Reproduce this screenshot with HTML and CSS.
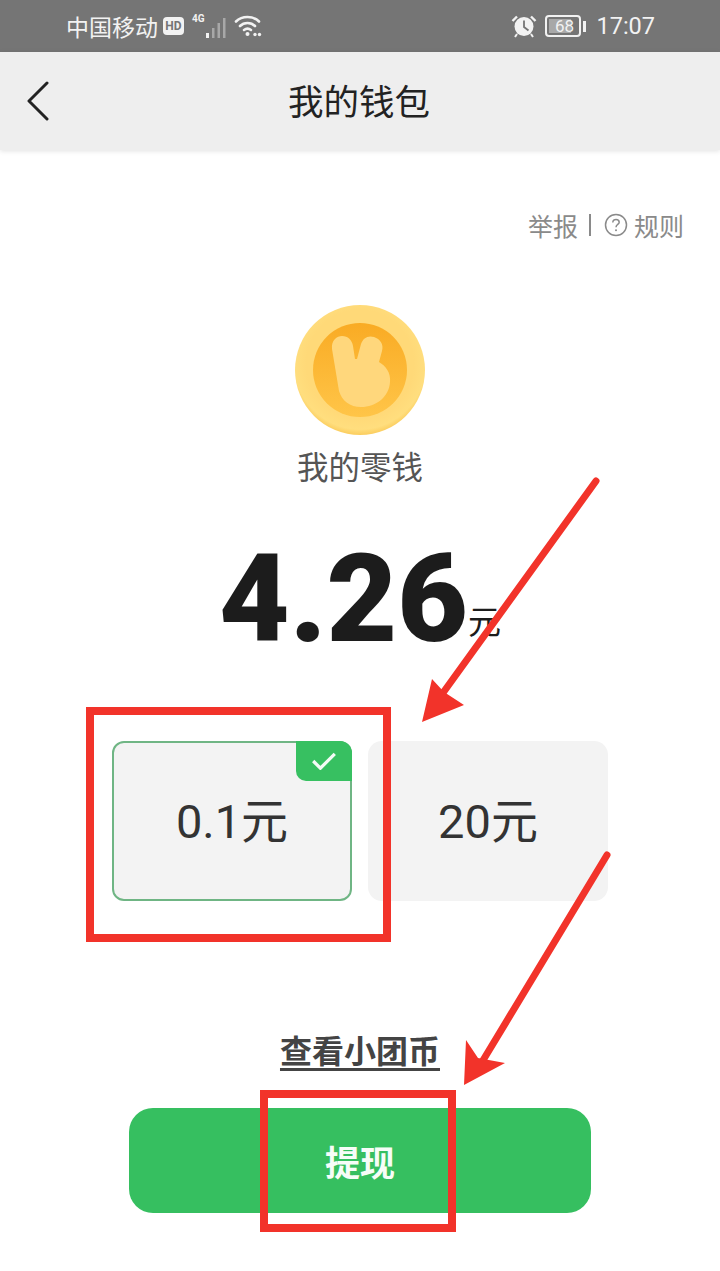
FILE: index.html
```html
<!DOCTYPE html>
<html lang="zh-CN">
<head>
<meta charset="utf-8">
<title>我的钱包</title>
<link rel="stylesheet" href="styles.css">
</head>
<body>
<div class="page">
  <header class="status">
    <div class="status-left">
      <span class="carrier">中国移动</span>
      <span class="hd">HD</span>
      <span class="net"><span class="net-4g">4G</span>
        <svg class="signal" width="24" height="24" viewBox="0 0 24 24"><rect x="1" y="17" width="3" height="5" fill="#f2f2f2"/><rect x="7" y="12" width="2.5" height="10" fill="#a8a8a8"/><rect x="12.5" y="7" width="2.5" height="15" fill="#a8a8a8"/><rect x="18" y="2" width="2.5" height="20" fill="#a8a8a8"/></svg>
      </span>
      <svg class="wifi" width="28" height="24" viewBox="0 0 28 24" fill="none" stroke="#f2f2f2" stroke-width="2.6" stroke-linecap="round"><path d="M2 7.5C8 1.5 19 1.5 25 7.5"/><path d="M6 12C10 8 17 8 21 12"/><path d="M10 16C12 14.5 15 14.5 17 16"/><circle cx="13.5" cy="20" r="2" fill="#f2f2f2" stroke="none"/><circle cx="21" cy="20.5" r="1.7" fill="#f2f2f2" stroke="none"/><circle cx="25.5" cy="20.5" r="1.7" fill="#f2f2f2" stroke="none"/></svg>
    </div>
    <div class="status-right">
      <svg class="alarm" width="26" height="24" viewBox="0 0 26 24"><circle cx="13" cy="12.5" r="9.5" fill="#f2f2f2"/><path d="M13 6.5V13L17.5 16.5" fill="none" stroke="#757575" stroke-width="1.8"/><path d="M1.5 7L6 2.5M24.5 7L20 2.5" stroke="#f2f2f2" stroke-width="2.4"/><path d="M6 20L4 23M20 20L22 23" stroke="#f2f2f2" stroke-width="2"/></svg>
      <span class="battery"><span class="battery-fill"></span><span class="battery-num">68</span></span>
      <span class="battery-nub"></span>
      <span class="clock">17:07</span>
    </div>
  </header>

  <nav class="nav">
    <svg class="back" width="24" height="40" viewBox="0 0 24 40" fill="none" stroke="#222" stroke-width="3" stroke-linecap="round" stroke-linejoin="round"><path d="M21 2L3 20L21 38"/></svg>
    <h1 class="nav-title">我的钱包</h1>
  </nav>

  <main class="main">
    <div class="links">
      <span>举报</span><span class="sep"></span>
      <svg class="help" width="24" height="24" viewBox="0 0 24 24" fill="none" stroke="#8a8a8a" stroke-width="1.5"><circle cx="12" cy="12" r="10.5"/><path d="M8.8 9.4C8.8 7.4 10.3 6.4 12 6.4S15.2 7.5 15.2 9.2C15.2 11.4 12 11.5 12 14.2"/><circle cx="12" cy="17.3" r="1" fill="#8a8a8a" stroke="none"/></svg>
      <span>规则</span>
    </div>

    <svg class="coin" width="130" height="130" viewBox="0 0 130 130">
      <defs>
        <radialGradient id="rim" cx="50%" cy="45%" r="55%"><stop offset="0.75" stop-color="#ffd978"/><stop offset="0.92" stop-color="#ffde7e"/><stop offset="1" stop-color="#fbcd5e"/></radialGradient>
        <linearGradient id="inner" x1="0" y1="0" x2="0" y2="1"><stop offset="0" stop-color="#f9ab24"/><stop offset="1" stop-color="#ffc548"/></linearGradient>
      </defs>
      <circle cx="65" cy="65" r="65" fill="url(#rim)"/>
      <circle cx="65" cy="65" r="47" fill="url(#inner)"/>
      <path d="M37 44C36 35 42 31 47 31C53 31 57 35 58 41L60 54L62 54L66 39C68 33 73 30 79 32C85 34 89 39 87 46L84 57C91 61 96 68 95 77C94 92 81 102 66 102C55 102 47 96 44 86Z" fill="#ffd77c"/>
    </svg>
    <div class="coin-label">我的零钱</div>

    <div class="balance"><span class="amount">4.26</span><span class="unit">元</span></div>

    <div class="options">
      <div class="option option-on">
        0.1元
        <span class="tick"><svg width="26" height="18" viewBox="0 0 28 20" fill="none" stroke="#f4fbf6" stroke-width="3.6"><path d="M2 10L10 18L26 2"/></svg></span>
      </div>
      <div class="option">20元</div>
    </div>

    <a class="coins-link">查看小团币</a>
    <button class="withdraw">提现</button>
  </main>

  <svg class="marks" width="720" height="1271" viewBox="0 0 720 1271">
    <rect x="90" y="711" width="297" height="227" fill="none" stroke="#f2332a" stroke-width="8"/>
    <rect x="264" y="1094" width="188" height="134" fill="none" stroke="#f2332a" stroke-width="8"/>
    <path d="M596 481L440 697" stroke="#f2332a" stroke-width="7" stroke-linecap="round"/>
    <path d="M422 722L432 679L444 692L464 705Z" fill="#f2332a"/>
    <path d="M607 855L482 1062" stroke="#f2332a" stroke-width="7" stroke-linecap="round"/>
    <path d="M464 1085L466 1040L478 1058L505 1063Z" fill="#f2332a"/>
  </svg>
</div>
</body>
</html>
```

FILE: styles.css
```css
* { box-sizing: border-box; }
html, body { margin: 0; padding: 0; background: #fff; }
body { font-family: "Noto Sans CJK SC", "Noto Sans", sans-serif; color: #222; }
.page { position: relative; width: 720px; height: 1271px; overflow: hidden; }

.status { height: 52px; background: #757575; color: #f2f2f2; display: flex; justify-content: space-between; align-items: center; padding: 0 65px 0 66px; }
.status-left, .status-right { display: flex; align-items: center; }
.carrier { font-size: 23px; line-height: 30px; }
.hd { width: 21px; height: 18px; margin-left: 5px; border-radius: 4px; background: #f2f2f2; color: #757575; font: 700 12px/18px "Roboto", sans-serif; text-align: center; }
.net { position: relative; display: flex; margin-left: 8px; margin-right: 7px; width: 35px; height: 24px; }
.net-4g { font: 700 10px/10px "Roboto", sans-serif; margin-top: 0; }
.signal { position: absolute; right: -2px; top: 2px; }
.wifi { display: block; }
.alarm { display: block; }
.battery { position: relative; margin-left: 8px; width: 36px; height: 22px; border: 2px solid #f2f2f2; border-radius: 4px; display: block; }
.battery-fill { position: absolute; left: 2px; top: 2px; bottom: 2px; width: 22px; background: #a8a8a8; }
.battery-num { position: absolute; left: 2px; right: 0; top: 0; text-align: center; font: 400 17px/18px "Roboto", sans-serif; color: #f2f2f2; }
.battery-nub { width: 3px; height: 11px; margin-left: 2px; background: #f2f2f2; }
.clock { margin-left: 10px; font: 400 23.5px/30px "Roboto", sans-serif; }

.nav { height: 98px; background: #eeeeee; box-shadow: 0 1px 5px rgba(0, 0, 0, .12); display: flex; align-items: center; justify-content: center; position: relative; }
.back { position: absolute; left: 26px; top: 29px; }
.nav-title { margin: -2px 2px 0 0; font-size: 35.5px; line-height: 48px; font-weight: 400; color: #222; }

.main { display: flex; flex-direction: column; align-items: center; }
.links { align-self: flex-end; display: flex; align-items: center; margin: 57px 36px 0 0; font-size: 25px; line-height: 36px; color: #8a8a8a; }
.sep { width: 2px; height: 22px; background: #8a8a8a; margin: 0 13px 0 11px; }
.help { margin-right: 6px; }
.coin { display: block; margin-top: 62px; }
.coin-label { margin-top: 7px; font-size: 31.5px; line-height: 46px; color: #555; }
.balance { display: flex; align-items: baseline; margin: 42px 0 0 0; height: 140px; }
.amount { font: 900 122px/140px "Roboto", sans-serif; color: #1c1c1c; }
.unit { font-size: 33px; line-height: 40px; color: #1c1c1c; transform: translateY(-7px); }

.options { display: flex; gap: 16px; margin-top: 71px; }
.option { position: relative; width: 240px; height: 160px; padding-bottom: 8px; border-radius: 14px; background: #f3f3f3; display: flex; align-items: center; justify-content: center; font-size: 47px; color: #333; font-family: "Roboto", "Noto Sans CJK SC", sans-serif; }
.option-on { border: 2px solid #6fb584; border-radius: 12px; }
.tick { position: absolute; top: -2px; right: -2px; width: 56px; height: 40px; background: #37c061; border-bottom-left-radius: 10px; border-top-right-radius: 12px; display: flex; align-items: center; justify-content: center; }

.coins-link { margin-top: 125px; font-size: 32px; line-height: 46px; font-weight: 700; color: #444; text-decoration: underline; text-underline-offset: 5px; }
.withdraw { margin-top: 36px; width: 462px; height: 105px; border: 0; border-radius: 24px; background: #36bf60; color: #f6fdf8; font-family: inherit; font-size: 35px; font-weight: 700; }

.marks { position: absolute; left: 0; top: 0; pointer-events: none; }
```
